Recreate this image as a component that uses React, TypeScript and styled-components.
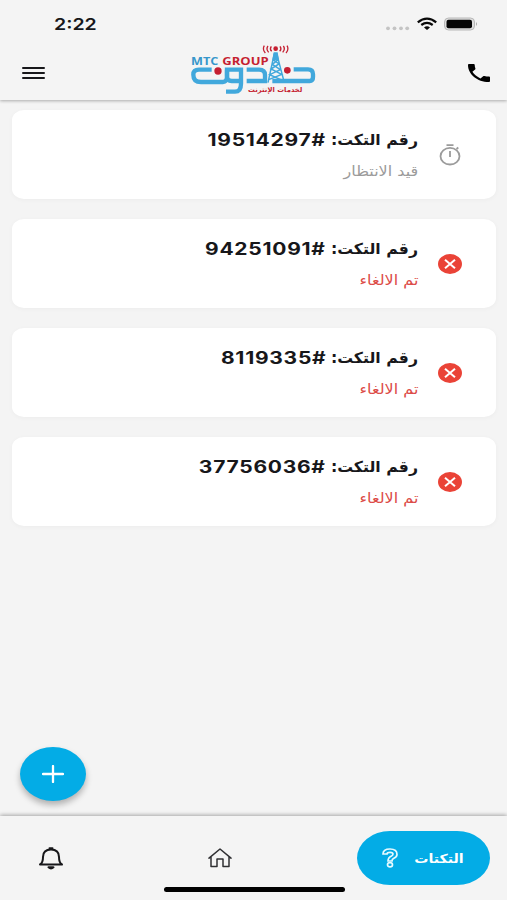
import React from "react";
import styled, { createGlobalStyle } from "styled-components";

const GlobalStyle = createGlobalStyle`
  * { box-sizing: border-box; }
  body { margin: 0; background: #f4f4f4; }
`;

const Screen = styled.main`
  display: flex;
  flex-direction: column;
  width: 507px;
  height: 900px;
  overflow: hidden;
  background: #f4f4f4;
  color: #17171a;
  font-family: Inter, "DejaVu Sans", sans-serif;
`;

const Header = styled.header`
  flex: none;
  height: 100px;
  background: #f4f4f4;
  box-shadow: 0 1px 3px rgba(0, 0, 0, 0.3);
`;

const StatusBar = styled.div`
  display: flex;
  justify-content: space-between;
  align-items: center;
  height: 46px;
  padding: 2px 29px 0 54px;
`;

const Clock = styled.span`
  font-size: 16px;
  font-weight: 600;
  line-height: 20px;
  transform: scaleX(1.22);
  transform-origin: left;
`;

const StatusIcons = styled.div`
  display: flex;
  align-items: center;
`;

const NavBar = styled.div`
  display: grid;
  grid-template: 54px / 1fr 150px 1fr;
  align-items: center;
  padding: 0 17px 0 22px;
`;

const IconButton = styled.button<{ $end?: boolean }>`
  display: flex;
  justify-self: ${(p) => (p.$end ? "end" : "start")};
  padding: 0;
  border: 0;
  background: none;
  color: inherit;
`;

const LogoSvg = styled.svg`
  display: block;
  width: 150px;
  height: 70px;
  margin: 0 0 6px -2.5px;
  overflow: visible;
`;

const TicketList = styled.section`
  display: flex;
  flex: 1;
  flex-direction: column;
  gap: 20px;
  padding: 10px 11.5px 0 12px;
`;

const Card = styled.article`
  display: flex;
  direction: rtl;
  height: 89px;
  padding: 18px 33.5px 0 0;
  gap: 20px;
  border-radius: 12px / 10px;
  background: #fff;
  box-shadow: 0 1px 5px rgba(0, 0, 0, 0.035);
`;

const StateIcon = styled.div`
  display: flex;
  width: 24px;
  height: 54px;
  align-items: center;
`;

const CardBody = styled.div`
  display: flex;
  flex-direction: column;
  gap: 8px;
`;

const Title = styled.h2`
  display: flex;
  align-items: center;
  margin: 0;
  height: 24px;
  white-space: nowrap;
`;

const Label = styled.span`
  width: 92px;
  font: bold 15px "DejaVu Sans", sans-serif;
  transform: scaleX(1.05);
  transform-origin: right;
`;

const TicketNumber = styled.span`
  display: flex;
  font: 650 17px Inter, sans-serif;
  letter-spacing: 0.6px;
  transform: scaleX(1.235);
  transform-origin: right;
`;

const Status = styled.span<{ $cancelled: boolean }>`
  align-self: flex-start;
  font: 14px/22px "DejaVu Sans", sans-serif;
  color: ${(p) => (p.$cancelled ? "#dc4b47" : "#9b9b9b")};
  transform: scaleX(1.145);
  transform-origin: right;
`;

const AddButton = styled.button`
  display: flex;
  flex: none;
  align-items: center;
  justify-content: center;
  width: 66px;
  height: 54px;
  margin: 0 0 15px 20px;
  padding: 0;
  border: 0;
  border-radius: 50%;
  background: #03ace6;
  box-shadow: 0 4px 6px rgba(0, 0, 0, 0.28);
`;

const TabBar = styled.nav`
  display: grid;
  flex: none;
  grid-template-columns: 101px 1fr 133px;
  align-items: center;
  height: 84px;
  padding-right: 17px;
  background: #f4f4f4;
  box-shadow: 0 -1px 4px rgba(0, 0, 0, 0.33);
`;

const Tab = styled.button`
  display: flex;
  justify-content: center;
  padding: 0;
  border: 0;
  background: none;
  color: #17171a;
`;

const HomeTab = styled(Tab)`
  padding-right: 19px;
`;

const ActiveTab = styled.button`
  display: flex;
  align-items: center;
  justify-content: space-between;
  height: 54px;
  padding: 0 26px 0 25px;
  border: 0;
  border-radius: 33px / 27px;
  background: #03ace6;
  color: #fff;
`;

const TabLabel = styled.span`
  font: bold 12.5px "DejaVu Sans", sans-serif;
  transform: scaleX(1.13);
  transform-origin: right;
`;

const HomeIndicator = styled.div`
  width: 181px;
  height: 5px;
  margin: -13px 0 8px 164px;
  flex: none;
  border-radius: 3px;
  background: #000;
`;

function Logo() {
  return (
    <LogoSvg viewBox="0 0 450 210" role="img" aria-label="MTC Group">
      <g fill="none" stroke="#41a8dc" strokeWidth="13">
        <path d="M98 104H60Q43 104 43 119Q43 141 66 141H132Q144 141 144 124V104H186V146Q186 170 168 170H141" />
        <path d="M144 104V124Q144 138 158 138H186" />
        <path d="M203 104H240Q258 104 258 120V138H203" />
        <path d="M280 138H392Q402 138 402 126V118Q402 103 387 103H344" />
      </g>
      <g fill="none" stroke="#41a8dc" strokeWidth="4.5">
        <path d="M286 55L267 143M293 55L316 143M282 74L300 87L276 102L308 118L269 134M297 74L280 88L304 104L272 119L312 137" />
      </g>
      <path d="M284 52h12l4 24h-20z" fill="#41a8dc" />
      <g fill="#c51f31">
        <circle cx="117" cy="108" r="11" />
        <circle cx="325" cy="106" r="10" />
        <circle cx="290" cy="41" r="7" />
      </g>
      <g fill="none" stroke="#c51f31" strokeWidth="4">
        <path d="M277 34Q271 42 278 49M267 33Q260 42 269 52M256 32Q249 43 259 54M303 34Q309 42 302 49M313 33Q320 42 311 52M324 32Q331 43 321 54" />
      </g>
      <g fontFamily="Open Sans, sans-serif" fontSize="30" fontWeight="700">
        <text x="36" y="89" fill="#3797cb" textLength="82" lengthAdjust="spacingAndGlyphs">MTC</text>
        <text x="130" y="89" fill="#c51f31" textLength="139" lengthAdjust="spacingAndGlyphs">GROUP</text>
      </g>
      <text x="370" y="172" direction="rtl" fill="#c51f31" fontFamily="DejaVu Sans" fontWeight="bold" fontSize="20" textLength="163" lengthAdjust="spacingAndGlyphs">لخدمات الإنترنت</text>
    </LogoSvg>
  );
}

function Signal() {
  return (
    <svg width="109" height="20" viewBox="0 0 109 20">
      <g fill="#c4c4c4"><circle cx="19" cy="14.3" r="1.9"/><circle cx="25.5" cy="14.3" r="1.9"/><circle cx="32" cy="14.3" r="1.9"/><circle cx="38.2" cy="14.3" r="1.9"/></g>
      <g transform="translate(.5 -.5)">
        <path d="M48.3 8.8Q57.5 1.5 66.7 8.8" fill="none" stroke="#090909" strokeWidth="2.3"/>
        <path d="M51.8 11.5Q57.5 7.2 63.2 11.5" fill="none" stroke="#090909" strokeWidth="2.2"/>
        <path d="M54.5 14Q57.5 11.5 60.5 14L57.5 16.5Z" fill="#090909"/>
      </g>
      <rect x="75.5" y="4" width="30" height="12" rx="4" fill="#dedede" stroke="#b8b8b8"/>
      <rect x="77.5" y="5.7" width="25.5" height="8.6" rx="2" fill="#050505"/>
      <path d="M107 8Q109 10 107 12Z" fill="#aaa"/>
    </svg>
  );
}

function TimerIcon() {
  return (
    <svg width="24" height="22" viewBox="0 0 24 22" fill="none" stroke="#9b9b9b" strokeWidth="1.8">
      <ellipse cx="12" cy="12.2" rx="9.5" ry="8.3"/><path d="M8.5 1.2h7M12 7v6M18.5 5l1.8-1.5"/>
    </svg>
  );
}

function CancelIcon() {
  return (
    <svg width="24" height="20" viewBox="0 0 24 20">
      <ellipse cx="12" cy="10" rx="12" ry="10" fill="#ea4337"/><path d="M7 5.8l10 8.4M17 5.8L7 14.2" stroke="#fff" strokeWidth="2"/>
    </svg>
  );
}

const tickets = [
  { id: "19514297", cancelled: false },
  { id: "94251091", cancelled: true },
  { id: "8119335", cancelled: true },
  { id: "37756036", cancelled: true },
];

export default function App() {
  return (
    <Screen>
      <GlobalStyle />
      <Header>
        <StatusBar><Clock>2:22</Clock><StatusIcons><Signal /></StatusIcons></StatusBar>
        <NavBar>
          <IconButton aria-label="Menu">
            <svg width="23" height="14" viewBox="0 0 23 14"><path d="M1 2h21M1 7h21M1 12h21" stroke="#17171a" strokeWidth="2" strokeLinecap="round"/></svg>
          </IconButton>
          <Logo />
          <IconButton $end aria-label="Call">
            <svg width="22" height="18" viewBox="3 3 18 18" preserveAspectRatio="none"><path d="M6.62 10.79c1.44 2.83 3.76 5.14 6.59 6.59l2.2-2.2c.27-.27.67-.36 1.02-.24 1.12.37 2.33.57 3.57.57.55 0 1 .45 1 1V20c0 .55-.45 1-1 1-9.39 0-17-7.61-17-17 0-.55.45-1 1-1h3.5c.55 0 1 .45 1 1 0 1.25.2 2.45.57 3.57.11.35.03.74-.25 1.02z"/></svg>
          </IconButton>
        </NavBar>
      </Header>
      <TicketList>
        {tickets.map((ticket) => (
          <Card key={ticket.id}>
            <StateIcon>{ticket.cancelled ? <CancelIcon /> : <TimerIcon />}</StateIcon>
            <CardBody>
              <Title><Label>رقم التكت:</Label><TicketNumber><span>#</span><span>{ticket.id}</span></TicketNumber></Title>
              <Status $cancelled={ticket.cancelled}>{ticket.cancelled ? "تم الالغاء" : "قيد الانتظار"}</Status>
            </CardBody>
          </Card>
        ))}
      </TicketList>
      <AddButton aria-label="Add ticket">
        <svg width="22" height="18" viewBox="0 0 22 18"><path d="M1 9h20M11 1v16" stroke="#fff" strokeWidth="2.3" strokeLinecap="round"/></svg>
      </AddButton>
      <TabBar>
        <Tab aria-label="Notifications">
          <svg width="26" height="24" viewBox="0 0 26 24" fill="none" stroke="#17171a" strokeWidth="2" strokeLinejoin="round"><path d="M2 18.5Q5 17 5 11Q5 3.5 13 3.5T21 11Q21 17 24 18.5Z"/><path d="M11.5 2.2h3M10.5 21.3Q13 23.5 15.5 21.3Z" strokeLinecap="round"/></svg>
        </Tab>
        <HomeTab aria-label="Home">
          <svg width="26" height="22" viewBox="0 0 26 22" fill="none" stroke="#303033" strokeWidth="1.5" strokeLinejoin="round" strokeLinecap="round"><path d="M2 11.2L13 2L24 11.2M4 10v9.5h6V12h6v7.5h6V10"/></svg>
        </HomeTab>
        <ActiveTab>
          <svg width="16" height="20" viewBox="0 0 16 20" fill="none" stroke="#e7faff" strokeWidth="1.7"><path d="M1 6Q1 1 8 1T15 6.5Q15 9 11.5 10.5Q10 11.2 10 13H6Q6 9.5 9.5 8Q11 7.3 11 6Q11 4.3 8 4.3T5 6Z"/><ellipse cx="8" cy="16.8" rx="2.5" ry="2.1"/></svg>
          <TabLabel>التكتات</TabLabel>
        </ActiveTab>
      </TabBar>
      <HomeIndicator />
    </Screen>
  );
}
